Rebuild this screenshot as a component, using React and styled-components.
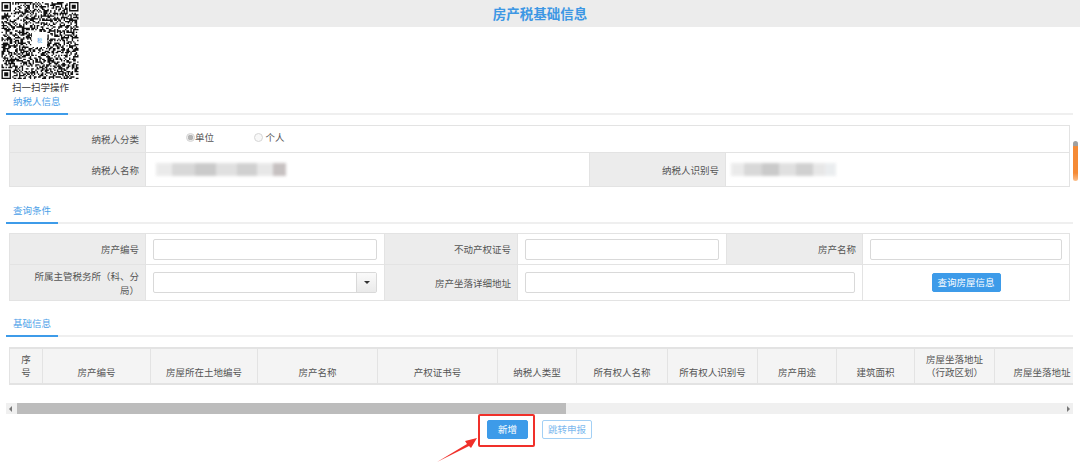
import React from "react";
import styled, { createGlobalStyle } from "styled-components";

const Global = createGlobalStyle`
  html, body { margin: 0; padding: 0; background: #fff; }
  body { font-family: "Noto Sans CJK SC", "Liberation Sans", sans-serif; color: #555; overflow: hidden; }
  * { box-sizing: border-box; }
`;

const Page = styled.div`
  position: relative;
  width: 1080px;
  height: 476px;
  overflow: hidden;
  font-size: 9.5px;
`;

const TitleBar = styled.h1`
  margin: 0 0 0 80px;
  padding-right: 80px;
  height: 27px;
  background: #ececec;
  color: #3d97e4;
  font-size: 13.5px;
  font-weight: 700;
  line-height: 27px;
  text-align: center;
`;

const QrBlock = styled.div`
  position: absolute;
  left: 0;
  top: 0;
  width: 80px;
  height: 94px;
  background: #fff;
`;

const QrLogo = styled.span`
  position: absolute;
  left: 32px;
  top: 32px;
  width: 15px;
  height: 15px;
  background: #fff;
  color: #3d97e4;
  font-size: 5px;
  line-height: 15px;
  text-align: center;
`;

const QrCaption = styled.div`
  position: absolute;
  left: 12px;
  top: 81px;
  color: #333;
  line-height: 13px;
  white-space: nowrap;
`;

const Section = styled.section`
  margin: ${(p) => p.$top}px 7px 0 6px;
`;

const SectionHead = styled.div`
  height: 21px;
  border-bottom: 2px solid #efefef;
`;

const SectionTab = styled.span`
  display: inline-block;
  height: 21px;
  padding: 0 7px;
  border-bottom: 2px solid #3d9be9;
  color: #4ba0e8;
  line-height: 15px;
`;

const FormTable = styled.table`
  table-layout: fixed;
  width: 1060px;
  margin: ${(p) => p.$top}px 0 0 3px;
  border-collapse: collapse;
  border: 1px solid #e3e3e3;
`;

const Row = styled.tr`
  height: ${(p) => p.$h}px;
`;

const Label = styled.td`
  padding: 0 6px 0 18px;
  background: #ececec;
  border: 1px solid #e3e3e3;
  text-align: right;
  line-height: 14px;
  color: #555;
`;

const Value = styled.td`
  padding: 0 7px;
  border: 1px solid #e3e3e3;
`;

const ValueCenter = styled(Value)`
  text-align: center;
`;

const RadioGroup = styled.div`
  display: flex;
  align-items: center;
  padding: 0 0 3px 33px;
  line-height: 13px;
`;

const RadioItem = styled.label`
  display: flex;
  align-items: center;
  gap: ${(p) => p.$gap}px;
  margin-right: 39.5px;
  white-space: nowrap;
`;

const RadioDot = styled.span`
  display: block;
  width: 9px;
  height: 9px;
  border-radius: 50%;
  border: 1px solid #d6d6d6;
  background: ${(p) => (p.$on ? "radial-gradient(circle, #b5b5b5 0 2.5px, #ececec 3px)" : "#f8f8f8")};
`;

const Blurred = styled.div`
  width: ${(p) => p.$w}px;
  height: 13px;
  margin-left: ${(p) => p.$left}px;
  filter: blur(1.5px);
  opacity: 0.8;
  background: linear-gradient(90deg, #e6e6e6 0 12%, #cfcfcf 12% 30%, #bdbdbd 30% 46%, #d9d9d9 46% 62%, #c5c5c5 62% 78%, #e2e2e2 78% 90%, ${(p) => p.$end} 90%);
`;

const TextInput = styled.input`
  display: block;
  width: 100%;
  height: 21px;
  border: 1px solid #d9d9d9;
  border-radius: 2px;
  background: #fff;
  outline: none;
`;

const Combo = styled.div`
  display: flex;
  height: 21px;
  border: 1px solid #d9d9d9;
  border-radius: 2px;
`;

const ComboField = styled.div`
  flex: 1;
`;

const ComboButton = styled.div`
  display: flex;
  align-items: center;
  justify-content: center;
  width: 20px;
  background: linear-gradient(#fafafa, #eaeaea);
  border-left: 1px solid #d9d9d9;
`;

const Caret = styled.span`
  width: 0;
  height: 0;
  border: 3px solid transparent;
  border-top: 3px solid #333;
  border-bottom: 0;
`;

const PrimaryButton = styled.button`
  display: block;
  height: 19px;
  width: ${(p) => p.$w}px;
  padding: 0;
  border: 1px solid #3d9be9;
  border-radius: 2px;
  background: #3d9be9;
  color: #fff;
  font: inherit;
  line-height: 17px;
`;

const QueryButton = styled(PrimaryButton)`
  margin: 0 auto;
`;

const OutlineButton = styled(PrimaryButton)`
  background: #fff;
  border-color: #a3d0f5;
  color: #7db9ee;
`;

const DataWrap = styled.div`
  margin: 10px 0 0 3px;
  width: 1064px;
  overflow: hidden;
`;

const DataTable = styled.table`
  table-layout: fixed;
  width: 1080px;
  border-collapse: collapse;
`;

const Th = styled.th`
  height: 36px;
  padding: 0 8px 4px;
  vertical-align: bottom;
  background: #f4f4f4;
  border: 1px solid #e3e3e3;
  border-width: 2px 1px 2px 1px;
  font-weight: 400;
  line-height: 13px;
  text-align: center;
  color: #555;
`;

const Track = styled.div`
  display: flex;
  align-items: center;
  height: 11px;
  margin-top: 18px;
  background: #f0f0f0;
`;

const TrackArrow = styled.span`
  width: 0;
  height: 0;
  margin: ${(p) => (p.$right ? "0 3px 0 0" : "0 0 0 3px")};
  border: 3px solid transparent;
  ${(p) => (p.$right ? "border-left: 3px solid #777; border-right: 0;" : "border-right: 3px solid #777; border-left: 0;")}
`;

const TrackThumb = styled.div`
  width: 549px;
  height: 11px;
  margin-left: 5px;
  background: #bcbcbc;
`;

const TrackGap = styled.div`
  flex: 1;
`;

const Actions = styled.div`
  display: flex;
  gap: 14px;
  margin: 6px 0 0 481px;
  align-items: center;
`;

const Highlighted = styled.div`
  position: relative;
`;

const RedBox = styled.span`
  position: absolute;
  left: -9px;
  right: -7px;
  top: -6px;
  bottom: -8px;
  border: 2px solid #f0302a;
  border-radius: 2px;
  pointer-events: none;
`;

const ArrowMark = styled.svg`
  position: absolute;
  left: 430px;
  top: 432px;
  width: 50px;
  height: 34px;
`;

const PageScroll = styled.div`
  position: absolute;
  left: 1073px;
  top: 141px;
  width: 5px;
  height: 40px;
  border-radius: 3px;
  background: linear-gradient(#a0a0a0 0 12%, #f58a35 14% 80%, #fbc08e 100%);
`;

function QrCode() {
  const n = 57;
  const cells = [];
  let s = 20240617;
  const rnd = () => {
    s = (s * 1664525 + 1013904223) >>> 0;
    return (s >>> 16) / 65536;
  };
  const finder = (x, y) => x < 8 && y < 8;
  for (let y = 0; y < n; y++) {
    for (let x = 0; x < n; x++) {
      const inFinder = finder(x, y) || finder(n - 1 - x, y) || finder(x, n - 1 - y);
      if (!inFinder && rnd() > 0.5) cells.push(`M${x} ${y}h1v1h-1z`);
    }
  }
  const eye = (x, y) =>
    `M${x} ${y}h7v7h-7zM${x + 1} ${y + 1}v5h5v-5zM${x + 2} ${y + 2}h3v3h-3z`;
  return (
    <svg width="78" height="77" viewBox="0 0 57 57" style={{ position: "absolute", left: 1, top: 2 }}>
      <path d={cells.join("")} fill="#111" />
      <path d={eye(0, 0) + eye(50, 0) + eye(0, 50)} fill="#111" fillRule="evenodd" />
    </svg>
  );
}

const columns = [
  [33, "序号"],
  [108, "房产编号"],
  [107, "房屋所在土地编号"],
  [120, "房产名称"],
  [120, "产权证书号"],
  [79, "纳税人类型"],
  [91, "所有权人名称"],
  [90, "所有权人识别号"],
  [79, "房产用途"],
  [78, "建筑面积"],
  [80, "房屋坐落地址（行政区划）"],
  [95, "房屋坐落地址"],
];

export default function App() {
  return (
    <Page>
      <Global />
      <TitleBar>房产税基础信息</TitleBar>

      <Section $top={67}>
        <SectionHead>
          <SectionTab>纳税人信息</SectionTab>
        </SectionHead>
        <FormTable $top={10}>
          <colgroup>
            <col width="136" />
            <col width="444" />
            <col width="136" />
            <col width="344" />
          </colgroup>
          <tbody>
            <Row $h={27}>
              <Label>纳税人分类</Label>
              <Value colSpan={3}>
                <RadioGroup>
                  <RadioItem $gap={0}>
                    <RadioDot $on />
                    单位
                  </RadioItem>
                  <RadioItem $gap={3}>
                    <RadioDot />
                    个人
                  </RadioItem>
                </RadioGroup>
              </Value>
            </Row>
            <Row $h={34}>
              <Label>纳税人名称</Label>
              <Value>
                <Blurred $w={130} $left={3} $end="#b9b2b2" />
              </Value>
              <Label>纳税人识别号</Label>
              <Value>
                <Blurred $w={105} $left={-2} $end="#e6e9ec" />
              </Value>
            </Row>
          </tbody>
        </FormTable>
      </Section>

      <Section $top={16}>
        <SectionHead>
          <SectionTab>查询条件</SectionTab>
        </SectionHead>
        <FormTable $top={9}>
          <colgroup>
            <col width="136" />
            <col width="239" />
            <col width="133" />
            <col width="209" />
            <col width="136" />
            <col width="207" />
          </colgroup>
          <tbody>
            <Row $h={31}>
              <Label>房产编号</Label>
              <Value>
                <TextInput />
              </Value>
              <Label>不动产权证号</Label>
              <Value>
                <TextInput />
              </Value>
              <Label>房产名称</Label>
              <Value>
                <TextInput />
              </Value>
            </Row>
            <Row $h={36}>
              <Label>所属主管税务所（科、分局）</Label>
              <Value>
                <Combo>
                  <ComboField />
                  <ComboButton>
                    <Caret />
                  </ComboButton>
                </Combo>
              </Value>
              <Label>房产坐落详细地址</Label>
              <Value colSpan={2}>
                <TextInput />
              </Value>
              <ValueCenter>
                <QueryButton $w={69}>查询房屋信息</QueryButton>
              </ValueCenter>
            </Row>
          </tbody>
        </FormTable>
      </Section>

      <Section $top={15}>
        <SectionHead>
          <SectionTab>基础信息</SectionTab>
        </SectionHead>
        <DataWrap>
          <DataTable>
            <colgroup>
              {columns.map(([w, t]) => (
                <col key={t} width={w} />
              ))}
            </colgroup>
            <thead>
              <tr>
                {columns.map(([, t]) => (
                  <Th key={t}>{t}</Th>
                ))}
              </tr>
            </thead>
          </DataTable>
        </DataWrap>
        <Track>
          <TrackArrow />
          <TrackThumb />
          <TrackGap />
          <TrackArrow $right />
        </Track>
        <Actions>
          <Highlighted>
            <PrimaryButton $w={41}>新增</PrimaryButton>
            <RedBox />
          </Highlighted>
          <OutlineButton $w={50}>跳转申报</OutlineButton>
        </Actions>
      </Section>

      <ArrowMark viewBox="0 0 50 34">
        <path d="M7 30 L37 12 L35 9 L47 6 L41 16 L39 14 Z" fill="#f0302a" />
      </ArrowMark>

      <QrBlock>
        <QrCode />
        <QrLogo>税</QrLogo>
        <QrCaption>扫一扫学操作</QrCaption>
      </QrBlock>

      <PageScroll />
    </Page>
  );
}
